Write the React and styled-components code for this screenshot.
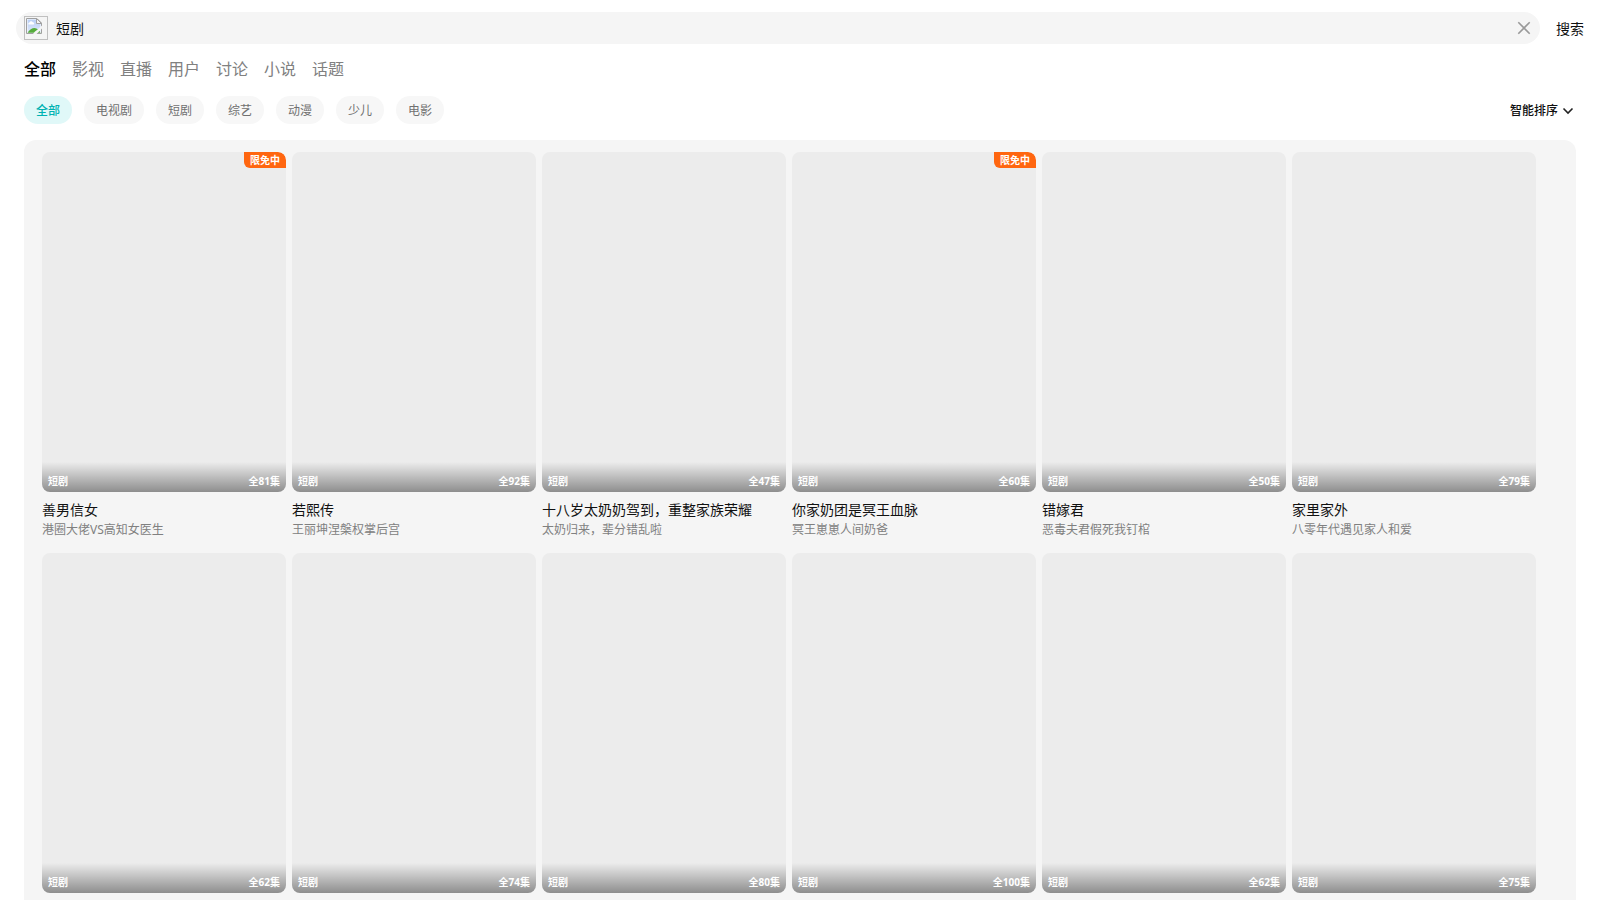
import React from 'react';
import styled, { createGlobalStyle } from 'styled-components';

const GlobalStyle = createGlobalStyle`
  *, *::before, *::after { box-sizing: border-box; }
  html, body { margin: 0; background: #fff; }
  body {
    height: 900px;
    overflow: hidden;
    font-family: "Noto Sans", "Noto Sans CJK SC", sans-serif;
    color: #111;
  }
`;

const Page = styled.div`
  display: flex;
  flex-direction: column;
  height: 900px;
  padding-top: 12px;
  overflow: hidden;
`;

const Header = styled.header`
  display: flex;
  flex: none;
  align-items: flex-start;
  height: 32px;
  padding: 0 16px;
`;

const SearchBox = styled.div`
  display: flex;
  flex: 1;
  align-items: center;
  height: 32px;
  padding: 0 8px;
  border-radius: 16px;
  background: #f5f5f5;
`;

const Placeholder = styled.span`
  flex: none;
  width: 24px;
  height: 24px;
  padding: 1px;
  border: 1px solid #c0c0c0;

  svg { display: block; }
`;

const Query = styled.span`
  flex: 1;
  align-self: flex-start;
  margin-left: 8px;
  font-size: 14px;
  line-height: 33px;
`;

const ClearButton = styled.span`
  display: flex;
  width: 16px;
  height: 16px;
`;

const SearchAction = styled.span`
  margin-left: 16px;
  font-size: 14px;
  line-height: 33px;
`;

const Tabs = styled.nav`
  display: flex;
  flex: none;
  gap: 16px;
  height: 52px;
  padding: 0 24px;
`;

const Tab = styled.span`
  font-size: 16px;
  line-height: 50px;
  font-weight: ${(p) => (p.$active ? 500 : 400)};
  color: ${(p) => (p.$active ? '#000' : '#808080')};
`;

const FilterRow = styled.div`
  display: flex;
  flex: none;
  align-items: flex-start;
  justify-content: space-between;
  height: 28px;
  padding: 0 26px 0 24px;
`;

const Filters = styled.div`
  display: flex;
  gap: 12px;
`;

const Chip = styled.span`
  height: 28px;
  padding: 0 12px;
  border-radius: 14px;
  font-size: 12px;
  line-height: 29px;
  font-weight: ${(p) => (p.$active ? 500 : 400)};
  color: ${(p) => (p.$active ? '#00b2b2' : '#707070')};
  background: ${(p) => (p.$active ? '#e0f8f8' : '#f7f7f7')};
`;

const Sort = styled.span`
  display: flex;
  align-items: center;
  gap: 4px;
  font-size: 12px;
  font-weight: 500;
  line-height: 29px;
`;

const Panel = styled.main`
  display: grid;
  flex: 1;
  grid-template-columns: repeat(6, 244px);
  grid-auto-rows: 386px;
  column-gap: 6px;
  row-gap: 15px;
  min-height: 0;
  margin: 16px 24px 0;
  padding: 12px 18px 0;
  border-radius: 12px 12px 0 0;
  background: #f5f5f5;
  overflow: hidden;
`;

const Card = styled.article`
  min-width: 0;
`;

const Poster = styled.div`
  position: relative;
  display: flex;
  align-items: flex-end;
  height: 340px;
  border-radius: 8px;
  background: #ececec;
  overflow: hidden;
`;

const Badge = styled.span`
  position: absolute;
  top: 0;
  right: 0;
  height: 16px;
  padding: 0 6px;
  border-radius: 0 8px 0 6px;
  background: #ff6610;
  color: #fff;
  font-size: 10px;
  font-weight: 700;
  line-height: 16px;
`;

const Caption = styled.div`
  display: flex;
  flex: 1;
  justify-content: space-between;
  height: 30px;
  padding: 9px 6px 0;
  background: linear-gradient(rgba(0, 0, 0, 0), rgba(0, 0, 0, 0.4));
  color: #fff;
  font-size: 10px;
  font-weight: 700;
  line-height: 20px;
`;

const Title = styled.div`
  margin-top: 8px;
  font-size: 14px;
  line-height: 19px;
  white-space: nowrap;
`;

const Subtitle = styled.div`
  margin-top: 1px;
  font-size: 12px;
  line-height: 19px;
  color: #808080;
  white-space: nowrap;
`;

const tabs = ['全部', '影视', '直播', '用户', '讨论', '小说', '话题'];
const filters = ['全部', '电视剧', '短剧', '综艺', '动漫', '少儿', '电影'];
const dramas = [
  { title: '善男信女', subtitle: '港圈大佬VS高知女医生', episodes: 81, free: true },
  { title: '若熙传', subtitle: '王丽坤涅槃权掌后宫', episodes: 92 },
  { title: '十八岁太奶奶驾到，重整家族荣耀', subtitle: '太奶归来，辈分错乱啦', episodes: 47 },
  { title: '你家奶团是冥王血脉', subtitle: '冥王崽崽人间奶爸', episodes: 60, free: true },
  { title: '错嫁君', subtitle: '恶毒夫君假死我钉棺', episodes: 50 },
  { title: '家里家外', subtitle: '八零年代遇见家人和爱', episodes: 79 },
  { episodes: 62 },
  { episodes: 74 },
  { episodes: 80 },
  { episodes: 100 },
  { episodes: 62 },
  { episodes: 75 },
];

function MissingImage() {
  return (
    <svg width="16" height="16" viewBox="0 0 16 16">
      <defs>
        <linearGradient id="sky" x1="0" y1="0" x2="0" y2="1">
          <stop offset="0" stopColor="#b9cff5" />
          <stop offset="1" stopColor="#dde7fa" />
        </linearGradient>
      </defs>
      <path d="M0.5 0.5H11L15.5 5V15.5H0.5Z" fill="#fff" stroke="#a0a0a0" />
      <path d="M1.5 1.5H10.5V5.5H14.5V14.5H1.5Z" fill="url(#sky)" />
      <path d="M2.5 6.5a1.3 1.3 0 0 1 1-2 1.8 1.8 0 0 1 3.2-.3 1.3 1.3 0 0 1 1 2.3Z" fill="#fff" />
      <path d="M1.5 14.8C3.5 12 6 10 8.5 10C11 10.2 13.5 12 14.5 14.8Z" fill="#56ac3c" />
      <path d="M10.5 0.5V5.5H15.5Z" fill="#f4f4f4" stroke="#a0a0a0" />
      <path d="M7 16L9 13.5L11 12L16 7.5V10.5L10.5 16Z" fill="#f5f5f5" />
    </svg>
  );
}

export default function App() {
  return (
    <Page>
      <GlobalStyle />
      <Header>
        <SearchBox>
          <Placeholder><MissingImage /></Placeholder>
          <Query>短剧</Query>
          <ClearButton>
            <svg width="16" height="16" viewBox="0 0 16 16">
              <path d="M2.3 2.3L13.7 13.7M13.7 2.3L2.3 13.7" stroke="#999" strokeWidth="1.6" />
            </svg>
          </ClearButton>
        </SearchBox>
        <SearchAction>搜索</SearchAction>
      </Header>
      <Tabs>
        {tabs.map((t, i) => <Tab key={t} $active={i === 0}>{t}</Tab>)}
      </Tabs>
      <FilterRow>
        <Filters>
          {filters.map((f, i) => <Chip key={f} $active={i === 0}>{f}</Chip>)}
        </Filters>
        <Sort>
          智能排序
          <svg width="12" height="12" viewBox="0 0 12 12">
            <path d="M1.5 3.5L6 8L10.5 3.5" fill="none" stroke="#222" strokeWidth="1.6" />
          </svg>
        </Sort>
      </FilterRow>
      <Panel>
        {dramas.map((d, i) => (
          <Card key={i}>
            <Poster>
              {d.free && <Badge>限免中</Badge>}
              <Caption>
                <span>短剧</span>
                <span>全{d.episodes}集</span>
              </Caption>
            </Poster>
            {d.title && <Title>{d.title}</Title>}
            {d.subtitle && <Subtitle>{d.subtitle}</Subtitle>}
          </Card>
        ))}
      </Panel>
    </Page>
  );
}
